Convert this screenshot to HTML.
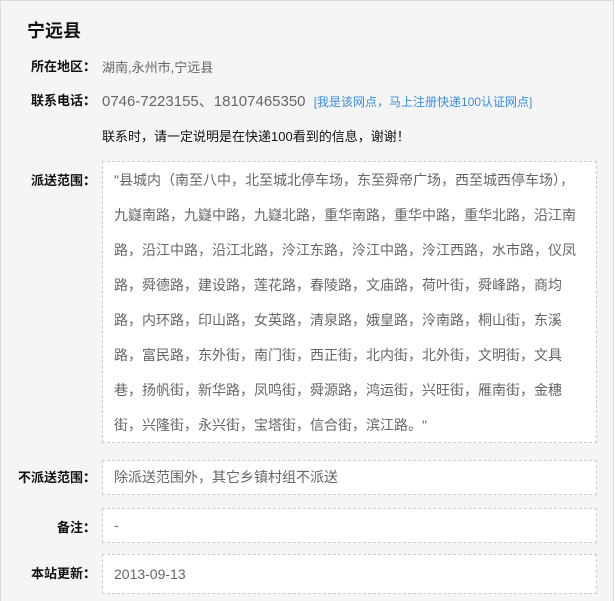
<!DOCTYPE html>
<html><head><meta charset="utf-8"><style>
body{margin:0;width:615px;height:593px;overflow:hidden;background:#fff;font-family:"Liberation Sans","Noto Sans CJK SC",sans-serif;}
.wrap{position:absolute;left:0;top:0;width:612px;height:600px;background:#f5f5f5;border:1px solid #ddd;border-bottom:none;}
h1{position:absolute;left:26px;top:16px;margin:0;font-size:18px;font-weight:bold;color:#111;}
.lab{position:absolute;left:0;width:95px;text-align:right;font-size:13px;font-weight:bold;color:#111;white-space:nowrap;}
.lab b{display:inline-block;width:13px;text-align:left;}
.val{position:absolute;left:101px;font-size:13px;color:#666;white-space:nowrap;}
.box{position:absolute;left:101px;width:495px;border:1px dashed #ccc;background:#fff;box-sizing:border-box;}
.box .in{padding-left:11px;font-size:14px;color:#666;white-space:nowrap;}
</style></head><body>
<div class="wrap">
<h1>宁远县</h1>
<div class="lab" style="top:55px">所在地区<b>：</b></div><div class="val" style="top:56px">湖南,永州市,宁远县</div>
<div class="lab" style="top:89px">联系电话<b>：</b></div><div class="val" style="top:89px;font-size:15px">0746-7223155、18107465350 <span style="font-size:12px;color:#3b8de0;margin-left:4px">[我是该网点，马上注册快递100认证网点]</span></div>
<div class="val" style="top:125px;color:#111">联系时，请一定说明是在快递100看到的信息，谢谢！</div>
<div class="lab" style="top:169px">派送范围<b>：</b></div>
<div class="box" style="top:160px;height:282px"><div class="in" style="line-height:35px;padding-top:1px">"县城内（南至八中，北至城北停车场，东至舜帝广场，西至城西停车场），<br>九嶷南路，九嶷中路，九嶷北路，重华南路，重华中路，重华北路，沿江南<br>路，沿江中路，沿江北路，泠江东路，泠江中路，泠江西路，水市路，仪凤<br>路，舜德路，建设路，莲花路，春陵路，文庙路，荷叶街，舜峰路，商均<br>路，内环路，印山路，女英路，清泉路，娥皇路，泠南路，桐山街，东溪<br>路，富民路，东外街，南门街，西正街，北内街，北外街，文明街，文具<br>巷，扬帆街，新华路，凤鸣街，舜源路，鸿运街，兴旺街，雁南街，金穗<br>街，兴隆街，永兴街，宝塔街，信合街，滨江路。"</div></div>
<div class="lab" style="top:466px">不派送范围<b>：</b></div>
<div class="box" style="top:459px;height:35px"><div class="in" style="line-height:32px">除派送范围外，其它乡镇村组不派送</div></div>
<div class="lab" style="top:516px">备注<b>：</b></div>
<div class="box" style="top:507px;height:35px"><div class="in" style="line-height:32px">-</div></div>
<div class="lab" style="top:562px">本站更新<b>：</b></div>
<div class="box" style="top:553px;height:40px"><div class="in" style="line-height:38px">2013-09-13</div></div>
</div>
</body></html>
